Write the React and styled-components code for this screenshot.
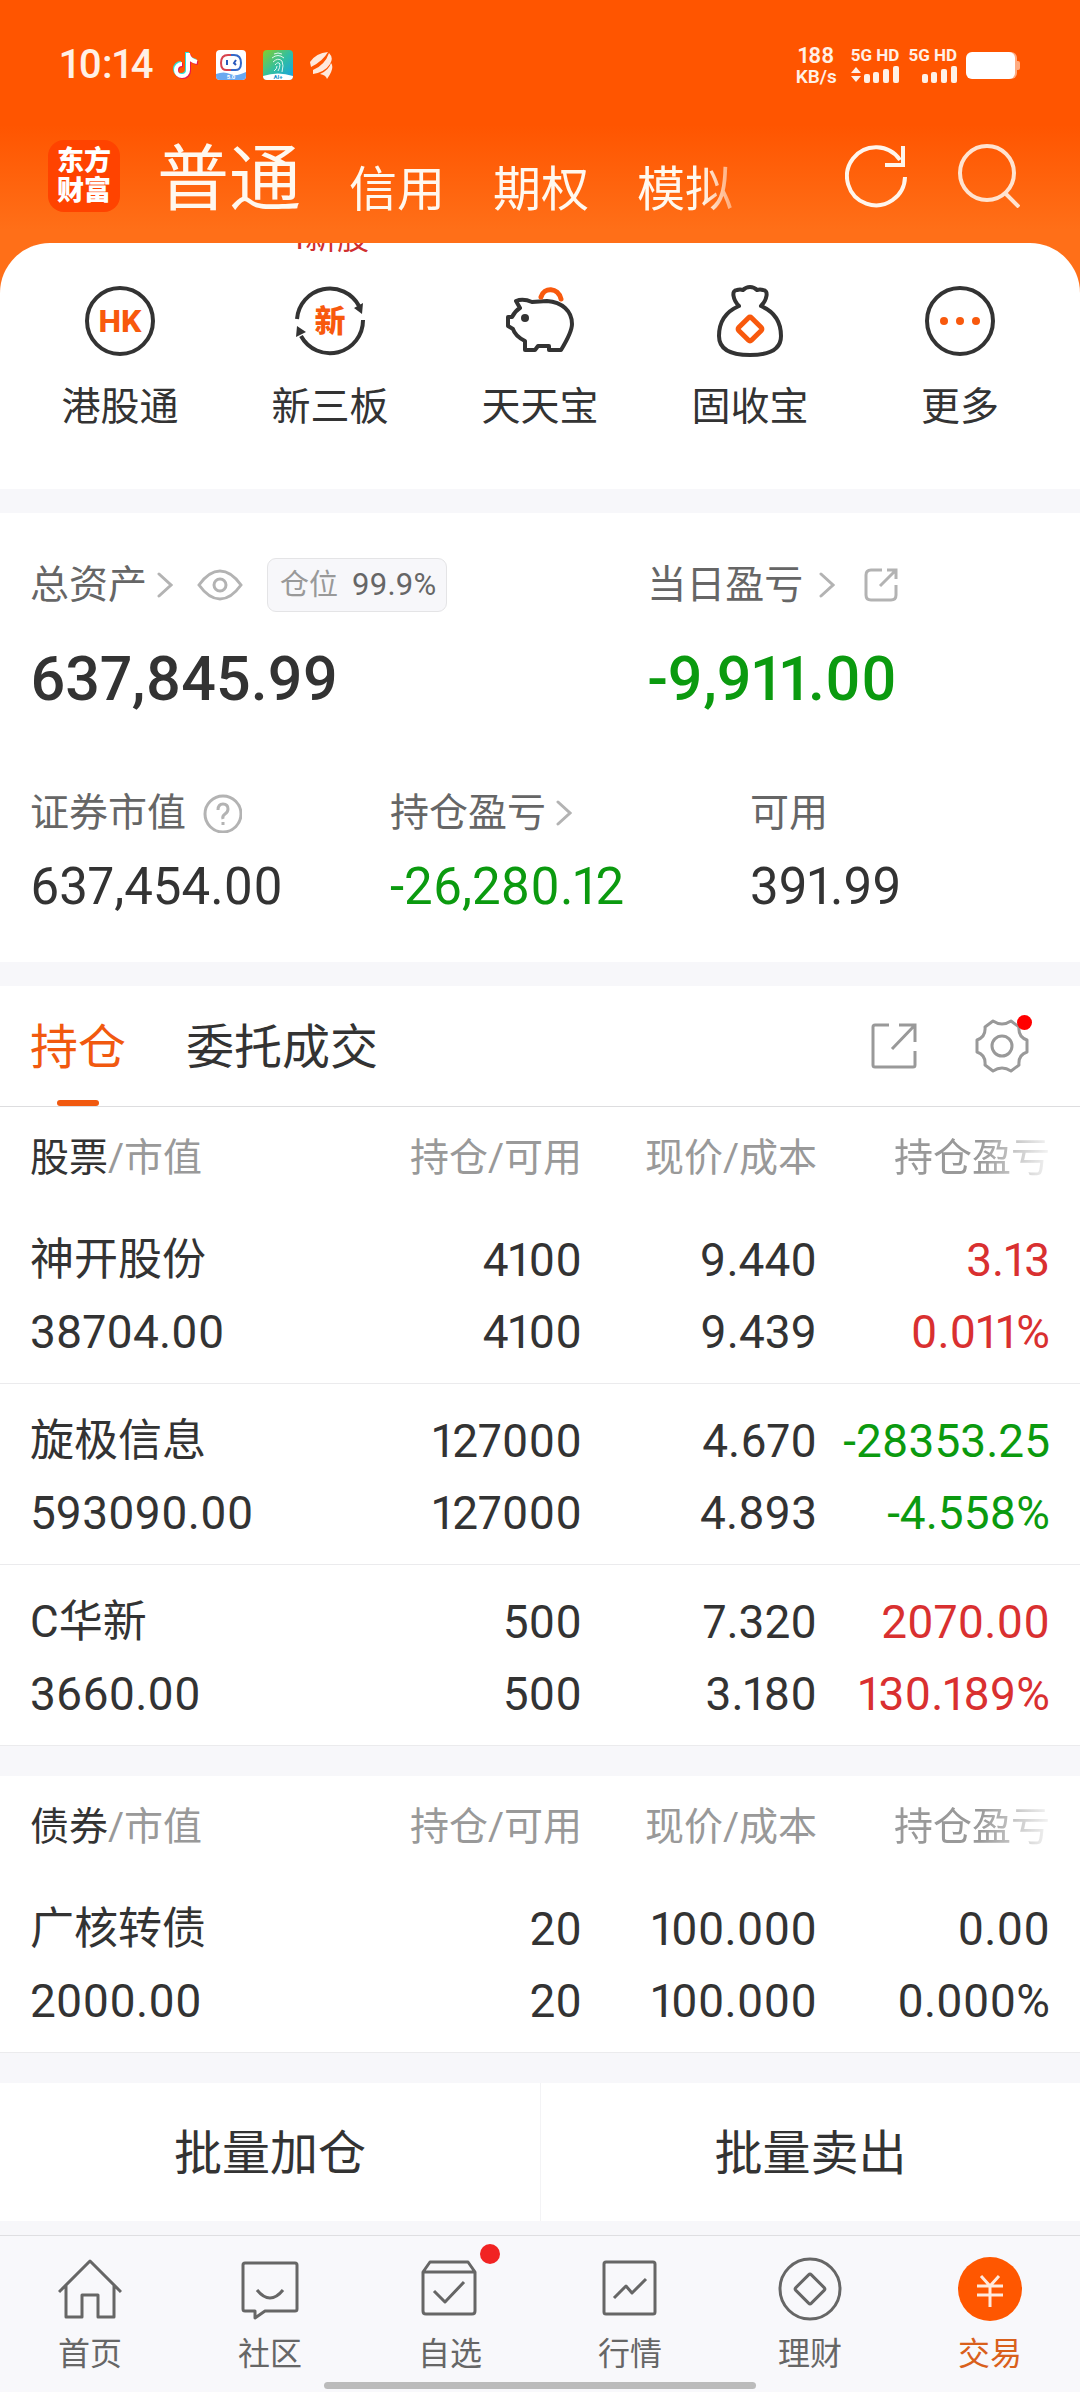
import React, { useState } from "react";
import styled, { createGlobalStyle } from "styled-components";

const holdings = [
  {
    name: "神开股份",
    value: "38704.00",
    amount: ["4100", "4100"],
    price: ["9.440", "9.439"],
    profit: ["3.13", "0.011%"],
    tone: "up",
  },
  {
    name: "旋极信息",
    value: "593090.00",
    amount: ["127000", "127000"],
    price: ["4.670", "4.893"],
    profit: ["-28353.25", "-4.558%"],
    tone: "down",
  },
  {
    name: "C华新",
    value: "3660.00",
    amount: ["500", "500"],
    price: ["7.320", "3.180"],
    profit: ["2070.00", "130.189%"],
    tone: "up",
  },
];

const bonds = [
  {
    name: "广核转债",
    value: "2000.00",
    amount: ["20", "20"],
    price: ["100.000", "100.000"],
    profit: ["0.00", "0.000%"],
    tone: "flat",
  },
];

const shortcuts = [
  { label: "港股通", icon: <HkIcon /> },
  { label: "新三板", icon: <NewBoardIcon /> },
  { label: "天天宝", icon: <PigIcon /> },
  { label: "固收宝", icon: <BagIcon /> },
  { label: "更多", icon: <MoreIcon /> },
];

const navItems = [
  { label: "首页", icon: <HomeIcon /> },
  { label: "社区", icon: <BubbleIcon /> },
  { label: "自选", icon: <BoxIcon />, dot: true },
  { label: "行情", icon: <ChartIcon /> },
  { label: "理财", icon: <CoinIcon /> },
  { label: "交易", icon: <TradeIcon />, active: true },
];

export default function App() {
  const [tab, setTab] = useState("持仓");

  return (
    <Page>
      <GlobalStyle />
      <Hero>
        <StatusBar />
        <Header>
          <Logo>
            东方
            <br />
            财富
          </Logo>
          <AccountTabs>
            <AccountTab $active>普通</AccountTab>
            <AccountTab>信用</AccountTab>
            <AccountTab>期权</AccountTab>
            <AccountTab>模拟</AccountTab>
          </AccountTabs>
          <HeaderActions>
            <IconButton aria-label="刷新">
              <RefreshIcon />
            </IconButton>
            <IconButton aria-label="搜索">
              <SearchIcon />
            </IconButton>
          </HeaderActions>
        </Header>
        <Panel>
          <TipRow>
            <Tip>1新股</Tip>
          </TipRow>
          <Shortcuts>
            {shortcuts.map((item) => (
              <Shortcut key={item.label}>
                {item.icon}
                <span>{item.label}</span>
              </Shortcut>
            ))}
          </Shortcuts>
        </Panel>
      </Hero>

      <Assets>
        <TopStats>
          <div>
            <TopLabel>
              总资产
              <Chevron $gap="10px" />
              <EyeIcon />
              <Badge>
                仓位 <BadgeValue>99.9%</BadgeValue>
              </Badge>
            </TopLabel>
            <BigNumber>637,845.99</BigNumber>
          </div>
          <div>
            <TopLabel>
              当日盈亏
              <Chevron $gap="16px" />
              <SmallExportIcon />
            </TopLabel>
            <BigNumber $tone="down">-9,911.00</BigNumber>
          </div>
        </TopStats>
        <SubStats>
          <div>
            <SubLabel>
              证券市值
              <HelpIcon />
            </SubLabel>
            <Number>637,454.00</Number>
          </div>
          <div>
            <SubLabel>
              持仓盈亏
              <Chevron $gap="10px" />
            </SubLabel>
            <Number $tone="down">-26,280.12</Number>
          </div>
          <div>
            <SubLabel>可用</SubLabel>
            <Number>391.99</Number>
          </div>
        </SubStats>
      </Assets>

      <Tabs>
        {["持仓", "委托成交"].map((name) => (
          <Tab key={name} $active={tab === name} onClick={() => setTab(name)}>
            {name}
          </Tab>
        ))}
        <TabActions>
          <IconButton aria-label="分享">
            <ExportIcon />
          </IconButton>
          <IconButton aria-label="设置">
            <GearIcon />
            <Dot $size="15px" $top="-4px" $right="-3px" $color="#ff0000" />
          </IconButton>
        </TabActions>
      </Tabs>
      <HoldingTable title="股票" rows={holdings} />
      <HoldingTable title="债券" rows={bonds} />

      <BatchActions>
        <BatchButton>批量加仓</BatchButton>
        <BatchButton>批量卖出</BatchButton>
      </BatchActions>

      <BottomNav>
        <NavList>
          {navItems.map((item) => (
            <NavLink href="#" key={item.label} $active={item.active}>
              <NavIcon>
                {item.icon}
                {item.dot && (
                  <Dot $size="20px" $top="-13px" $right="-18px" $color="#f12323" />
                )}
              </NavIcon>
              {item.label}
            </NavLink>
          ))}
        </NavList>
        <GestureBar />
      </BottomNav>
    </Page>
  );
}

function HoldingTable({ title, rows }) {
  return (
    <Table>
      <thead>
        <tr>
          <Th>
            <Strong>{title}</Strong>/市值
          </Th>
          <Th $width="236px">持仓/可用</Th>
          <Th $width="235px">现价/成本</Th>
          <Th $width="263px">
            <Fade>持仓盈亏</Fade>
          </Th>
        </tr>
      </thead>
      <tbody>
        {rows.map((row) => (
          <tr key={row.name}>
            <Td>
              <Name>{row.name}</Name>
              <Line>{row.value}</Line>
            </Td>
            <Td>
              <Line>{row.amount[0]}</Line>
              <Line>{row.amount[1]}</Line>
            </Td>
            <Td>
              <Line>{row.price[0]}</Line>
              <Line>{row.price[1]}</Line>
            </Td>
            <Td $tone={row.tone}>
              <Line>{row.profit[0]}</Line>
              <Line>{row.profit[1]}</Line>
            </Td>
          </tr>
        ))}
      </tbody>
    </Table>
  );
}

function StatusBar() {
  return (
    <Status>
      <Clock>10:14</Clock>
      <StatusApps>
        <NoteIcon />
        <RobotIcon />
        <FingerprintIcon />
        <SwooshIcon />
      </StatusApps>
      <Speed>
        <SpeedValue>188</SpeedValue>
        <SpeedUnit>KB/s</SpeedUnit>
      </Speed>
      <Signal>
        5G HD
        <SignalBars arrows />
      </Signal>
      <Signal>
        5G HD
        <SignalBars />
      </Signal>
      <BatteryIcon />
    </Status>
  );
}

/* ---------- icons ---------- */

function NoteIcon() {
  const note = "M14 2v17a6 6 0 1 1-6-6M14 3c1 5 4 7 9 8";
  return (
    <svg width="26" height="30" viewBox="0 0 26 30" fill="none" strokeWidth="4">
      <path d={note} stroke="#25e5dd" />
      <path d={note} stroke="#e8174f" transform="translate(2 2)" />
      <path d={note} stroke="#fff" transform="translate(1 1)" />
    </svg>
  );
}

function RobotIcon() {
  return (
    <svg width="30" height="30" viewBox="0 0 30 30" fill="none">
      <rect width="30" height="30" rx="4" fill="#fff" />
      <path d="M0 24q8-3 14 0t16-2v4q0 4-4 4H4q-4 0-4-4z" fill="#6aa9f0" />
      <path d="M15 5h-3q-7 0-7 8t7 7h3" stroke="#d8434e" strokeWidth="2" />
      <path d="M15 5h3q7 0 7 8t-7 7h-3" stroke="#3468c8" strokeWidth="2" />
      <path d="M11 10v5M20 10l-2 3 2 2" stroke="#2858bb" strokeWidth="2" />
      <text x="15" y="29" fontSize="6" fontWeight="700" textAnchor="middle" fill="#fff">
        5.0
      </text>
    </svg>
  );
}

function FingerprintIcon() {
  return (
    <svg width="30" height="30" viewBox="0 0 30 30" fill="none">
      <defs>
        <linearGradient id="finger" x1="0" y1="0" x2="1" y2="1">
          <stop offset="0" stopColor="#86cf2c" />
          <stop offset="0.5" stopColor="#32bfa0" />
          <stop offset="1" stopColor="#159fe8" />
        </linearGradient>
      </defs>
      <rect width="30" height="30" rx="4" fill="url(#finger)" />
      <path
        d="M11 4q4-2 8 0M9 8q6-5 12 0M10 12q5-5 9-1 2 4 0 11M12 15q3-4 5-1 0 4-2 7M14 16q0 3-3 5"
        stroke="#dff7ee"
      />
      <path d="M0 26q15-5 30 0 0 4-4 4H4q-4 0-4-4z" fill="#fff" />
      <text x="15" y="29" fontSize="6" fontWeight="700" textAnchor="middle" fill="#1593c9">
        AI+
      </text>
    </svg>
  );
}

function SwooshIcon() {
  return (
    <svg width="23" height="27" viewBox="0 0 23 27" fill="#ffe9dc">
      <path d="M0 10Q6 1 18 0 13 9 1 15z" />
      <path d="M3 18Q15 13 19 1 24 6 20 12 15 20 3 22z" />
      <path d="M10 22Q19 18 21 11 25 16 17 27 16 23 10 22z" />
    </svg>
  );
}

function SignalBars({ arrows }) {
  return (
    <svg width="48" height="17" viewBox="0 0 48 17" fill="#fff0e6">
      {arrows && <path d="M0 7l5-6 5 6zM0 10h10l-5 6z" />}
      <rect x="13" y="8" width="6" height="9" rx="2" />
      <rect x="22" y="6" width="6" height="11" rx="2" />
      <rect x="32" y="3" width="6" height="14" rx="2" />
      <rect x="42" y="0" width="6" height="17" rx="2" />
    </svg>
  );
}

function BatteryIcon() {
  return (
    <svg width="54" height="27" viewBox="0 0 54 27">
      <rect x="4" width="47" height="27" rx="6" fill="#ffab80" />
      <rect x="49" y="9" width="5" height="9" rx="2" fill="#ffab80" />
      <rect width="49" height="27" rx="6" fill="#fff" />
    </svg>
  );
}

function RefreshIcon() {
  return (
    <svg width="62" height="64" viewBox="0 0 62 64" fill="none" stroke="#fff5ec" strokeWidth="4">
      <path d="M60 33A29 29 0 1 1 55 16" />
      <path d="M58 2v19H40" />
    </svg>
  );
}

function SearchIcon() {
  return (
    <svg width="62" height="64" viewBox="0 0 62 64" fill="none" stroke="#ffe3d0" strokeWidth="4">
      <circle cx="29" cy="29" r="27" />
      <path d="M47 49l14 14" />
    </svg>
  );
}

function HkIcon() {
  return (
    <svg width="72" height="72" viewBox="0 0 72 72">
      <circle cx="36" cy="36" r="33" fill="none" stroke="#333" strokeWidth="4" />
      <text x="36" y="47" fontSize="32" fontWeight="800" textAnchor="middle" fill="#f8590d">
        HK
      </text>
    </svg>
  );
}

function NewBoardIcon() {
  return (
    <svg width="72" height="72" viewBox="0 0 72 72">
      <g fill="none" stroke="#333" strokeWidth="4">
        <path d="M3 34A33 33 0 0 1 65 21" />
        <path d="M69 35A33 33 0 0 1 7 51" />
      </g>
      <path d="M69 18L60 23 68 29zM3 41L2 52 12 47z" fill="#333" />
      <text x="36" y="47" fontSize="31" fontWeight="800" textAnchor="middle" fill="#f8590d">
        新
      </text>
    </svg>
  );
}

function PigIcon() {
  return (
    <svg width="72" height="72" viewBox="4 10 72 72" fill="none">
      <path
        d="M20 33L16 26Q23 23 32 27L47 26C62 27 72 36 72 49Q72 57 61 75H49V71H38L35 75H25V66Q15 61 13 54L8 51V42H12Q15 36 20 33z"
        stroke="#333"
        strokeWidth="4"
        strokeLinejoin="round"
      />
      <circle cx="25" cy="43" r="4" fill="#333" />
      <path d="M41 22C44 12 58 12 61 24" stroke="#f8590d" strokeWidth="5" strokeLinecap="round" />
    </svg>
  );
}

function BagIcon() {
  return (
    <svg width="72" height="72" viewBox="0 0 72 72" fill="none">
      <path
        d="M25 21C19 15 17 5 23 5Q26 4 29 5 32 2 36 2T43 5Q46 4 49 5C55 5 53 15 47 21C61 27 67 38 67 51C67 64 57 70 36 70S5 64 5 51C5 38 11 27 25 21z"
        stroke="#333"
        strokeWidth="4"
        strokeLinejoin="round"
      />
      <rect
        x="27"
        y="35"
        width="18"
        height="18"
        rx="2"
        transform="rotate(45 36 44)"
        stroke="#f8590d"
        strokeWidth="5"
      />
    </svg>
  );
}

function MoreIcon() {
  return (
    <svg width="72" height="72" viewBox="0 0 72 72">
      <circle cx="36" cy="36" r="33" fill="none" stroke="#333" strokeWidth="4" />
      <g fill="#f8590d">
        <circle cx="20" cy="36" r="4" />
        <circle cx="36" cy="36" r="4" />
        <circle cx="52" cy="36" r="4" />
      </g>
    </svg>
  );
}

function Chevron({ $gap }) {
  return (
    <ChevronSvg $gap={$gap} width="16" height="28" viewBox="0 0 16 28">
      <path d="M2 3l12 11L2 25" />
    </ChevronSvg>
  );
}

function EyeIcon() {
  return (
    <LabelIcon $gap="24px" width="46" height="32" viewBox="0 0 46 32">
      <path d="M2 16Q12 2 23 2T44 16Q34 30 23 30T2 16z" />
      <circle cx="23" cy="16" r="6" />
    </LabelIcon>
  );
}

function SmallExportIcon() {
  return (
    <LabelIcon $gap="29px" width="34" height="34" viewBox="0 0 34 34">
      <path d="M18 2H7Q2 2 2 7V27Q2 32 7 32H27Q32 32 32 27V17M23 2H32V11M32 2L16 18" />
    </LabelIcon>
  );
}

function HelpIcon() {
  return (
    <LabelIcon $gap="17px" width="39" height="39" viewBox="0 0 39 39">
      <circle cx="20" cy="20" r="18" />
      <path d="M15 16Q15 10 20 10T25 15Q25 18 22 20T20 25M20 28v3" />
    </LabelIcon>
  );
}

function ExportIcon() {
  return (
    <svg width="46" height="46" viewBox="0 0 46 46" fill="none" stroke="#999" strokeWidth="3">
      <path d="M18 2H4Q2 2 2 4V42Q2 44 4 44H42Q44 44 44 42V28M28 2H44V19M44 2L21 26" />
    </svg>
  );
}

function GearIcon() {
  return (
    <svg width="54" height="54" viewBox="0 0 54 54" fill="none" stroke="#999" strokeWidth="3">
      <path
        d="M52 21Q43 18 44 8L36 2Q27 8 18 2L10 8Q11 18 2 21V33Q11 36 10 46L18 52Q27 46 36 52L44 46Q43 36 52 33z"
        strokeLinejoin="round"
      />
      <circle cx="27" cy="27" r="10" />
    </svg>
  );
}

function HomeIcon() {
  return (
    <NavSvg viewBox="0 0 64 64">
      <path d="M1 35L32 4 63 35M8 28V60H24V38H40V60H56V28" />
    </NavSvg>
  );
}

function BubbleIcon() {
  return (
    <NavSvg viewBox="0 0 64 64">
      <path d="M7 6H57Q59 6 59 8V52Q59 54 57 54H27L17 61V54H7Q5 54 5 52V8Q5 6 7 6z" />
      <path d="M19 33Q32 49 45 33" />
    </NavSvg>
  );
}

function BoxIcon() {
  return (
    <NavSvg viewBox="0 0 64 64">
      <path d="M5 15L12 5H50L57 15V54Q57 57 54 57H8Q5 57 5 54zM5 15H57" />
      <path d="M16 34L27 45 46 25" />
    </NavSvg>
  );
}

function ChartIcon() {
  return (
    <NavSvg viewBox="0 0 64 64">
      <rect x="6" y="5" width="51" height="52" rx="2" />
      <path d="M16 41L28 29 34 36 48 22" />
    </NavSvg>
  );
}

function CoinIcon() {
  return (
    <NavSvg viewBox="0 0 64 64">
      <circle cx="32" cy="32" r="30" />
      <rect x="21" y="21" width="22" height="22" rx="2" transform="rotate(45 32 32)" />
    </NavSvg>
  );
}

function TradeIcon() {
  return (
    <svg width="64" height="64" viewBox="0 0 64 64">
      <circle cx="32" cy="32" r="32" fill="#ff5700" />
      <path
        d="M23 19L32 29 41 19M19 29H45M19 38H45M32 29V50"
        fill="none"
        stroke="#ffe9dc"
        strokeWidth="3"
      />
    </svg>
  );
}

/* ---------- styles ---------- */

const tones = { up: "#d93030", down: "#0b9a0f", flat: "#333333" };
const toneColor = ({ $tone }) => tones[$tone] || "#333333";

const GlobalStyle = createGlobalStyle`
  * {
    box-sizing: border-box;
  }
  body {
    margin: 0;
    background: #f7f7fa;
    color: #333333;
    font-family: Roboto, "Noto Sans CJK SC", sans-serif;
    font-variant-numeric: proportional-nums;
  }
  button {
    padding: 0;
    border: none;
    background: none;
    color: inherit;
    font-family: inherit;
    cursor: pointer;
  }
  svg {
    display: block;
    flex: none;
  }
`;
const Page = styled.div`
  display: flex;
  flex-direction: column;
  min-height: 100vh;
`;
const Hero = styled.header`
  background: linear-gradient(#ff5500 125px, #ff6f18 230px);
`;
const Status = styled.div`
  display: flex;
  align-items: center;
  height: 130px;
  padding: 0 60px;
  color: #fff0e6;
`;
const Clock = styled.div`
  font-size: 40px;
  font-weight: 500;
  line-height: 48px;
`;
const StatusApps = styled.div`
  display: flex;
  align-items: center;
  gap: 17px;
  flex: 1;
  margin-left: 19px;
`;
const Speed = styled.div`
  margin-right: 14px;
  font-weight: 600;
  text-align: center;
`;
const SpeedValue = styled.div`
  font-size: 22px;
  line-height: 22px;
`;
const SpeedUnit = styled.div`
  font-size: 19px;
  line-height: 19px;
`;
const Signal = styled.div`
  display: flex;
  flex-direction: column;
  align-items: flex-end;
  gap: 3px;
  margin-right: 9px;
  font-size: 17px;
  font-weight: 700;
  line-height: 16px;
`;
const Header = styled.div`
  display: flex;
  align-items: center;
  height: 113px;
  padding: 0 60px 22px 48px;
`;
const Logo = styled.div`
  width: 72px;
  height: 72px;
  padding: 6px 0;
  border-radius: 16px;
  background: #ff4300;
  color: #fff;
  font-size: 27px;
  font-weight: 900;
  line-height: 30px;
  text-align: center;
`;
const AccountTabs = styled.nav`
  display: flex;
  align-items: flex-end;
  gap: 48px;
  flex: 1;
  margin: 0 48px 0 37px;
  padding-top: 8px;
  mask-image: linear-gradient(to right, #000 85%, transparent 94%);
`;
const AccountTab = styled.button`
  color: #fff8ef;
  font-size: ${({ $active }) => ($active ? "72px" : "48px")};
  line-height: ${({ $active }) => ($active ? "80px" : "60px")};
  white-space: nowrap;
`;
const HeaderActions = styled.div`
  display: flex;
  gap: 51px;
`;
const IconButton = styled.button`
  position: relative;
`;
const Panel = styled.div`
  border-radius: 50px 50px 0 0;
  background: #ffffff;
`;
const TipRow = styled.div`
  display: grid;
  grid-template-columns: repeat(5, 1fr);
  grid-template-rows: 10px;
  align-items: end;
  padding: 0 15px;
  overflow: hidden;
`;
const Tip = styled.div`
  grid-column: 2;
  color: #d03030;
  font-size: 32px;
  line-height: 30px;
  text-align: center;
`;
const Shortcuts = styled.nav`
  display: grid;
  grid-template-columns: repeat(5, 1fr);
  padding: 32px 15px 58px;
`;
const Shortcut = styled.button`
  display: flex;
  flex-direction: column;
  align-items: center;
  gap: 26px;
  font-size: 39px;
  line-height: 48px;
`;
const Assets = styled.section`
  margin-top: 24px;
  padding: 45px 0 47px 30px;
  background: #ffffff;
`;
const TopStats = styled.div`
  display: grid;
  grid-template-columns: 4fr 3fr;
  margin-right: -30px;
`;
const SubStats = styled.div`
  display: grid;
  grid-template-columns: repeat(3, 1fr);
  margin-top: 81px;
  margin-right: -30px;
`;
const TopLabel = styled.div`
  display: flex;
  align-items: center;
  color: #666666;
  font-size: 39px;
  line-height: 54px;
`;
const SubLabel = styled(TopLabel)`
  line-height: 42px;
`;
const ChevronSvg = styled.svg`
  margin-left: ${({ $gap }) => $gap};
  fill: none;
  stroke: #b3b3b3;
  stroke-width: 3;
  stroke-linecap: round;
`;
const LabelIcon = styled.svg`
  margin-left: ${({ $gap }) => $gap};
  fill: none;
  stroke: #b3b3b3;
  stroke-width: 3;
`;
const Badge = styled.span`
  display: flex;
  align-items: center;
  gap: 14px;
  height: 54px;
  margin-left: 24px;
  padding: 0 10px 0 12px;
  border: 1px solid #e4e4e6;
  border-radius: 9px;
  background: #f7f7fa;
  color: #999999;
  font-size: 29px;
`;
const BadgeValue = styled.span`
  color: #666666;
  font-size: 31px;
`;
const BigNumber = styled.div`
  margin-top: 35px;
  color: ${toneColor};
  font-size: 61px;
  font-weight: 500;
  line-height: 64px;
`;
const Number = styled.div`
  margin-top: 25px;
  color: ${toneColor};
  font-size: 51px;
  line-height: 56px;
`;
const Tabs = styled.div`
  display: flex;
  align-items: center;
  gap: 60px;
  height: 121px;
  margin-top: 24px;
  padding: 0 51px 0 30px;
  border-bottom: 1px solid #dddddf;
  background: #ffffff;
`;
const Tab = styled.button`
  position: relative;
  padding-top: 4px;
  color: ${({ $active }) => ($active ? "#f1590f" : "#333333")};
  font-size: 48px;
  line-height: 116px;

  &::after {
    content: "";
    display: ${({ $active }) => ($active ? "block" : "none")};
    position: absolute;
    bottom: 0;
    left: calc(50% - 21px);
    width: 42px;
    height: 6px;
    border-radius: 3px;
    background: #f1590f;
  }
`;
const TabActions = styled.div`
  display: flex;
  align-items: center;
  gap: 58px;
  margin-left: auto;
`;
const Dot = styled.span`
  position: absolute;
  top: ${({ $top }) => $top};
  right: ${({ $right }) => $right};
  width: ${({ $size }) => $size};
  height: ${({ $size }) => $size};
  border-radius: 50%;
  background: ${({ $color }) => $color};
`;
const Table = styled.table`
  width: 100%;
  border-collapse: separate;
  border-spacing: 0;
  table-layout: fixed;
  background: #ffffff;

  & + & {
    margin-top: 30px;
  }
  th:first-child,
  td:first-child {
    padding-left: 30px;
    text-align: left;
  }
  th:last-child,
  td:last-child {
    padding-right: 30px;
  }
`;
const Th = styled.th`
  width: ${({ $width }) => $width || "auto"};
  padding: 21px 0 15px;
  color: #999999;
  font-size: 39px;
  font-weight: 400;
  line-height: 60px;
  text-align: right;
  white-space: nowrap;
`;
const Strong = styled.span`
  color: #333333;
`;
const Fade = styled.span`
  mask-image: linear-gradient(to right, #000 55%, rgba(0, 0, 0, 0.1));
`;
const Td = styled.td`
  padding: 21px 0 15px;
  border-bottom: 1px solid #ebebed;
  color: ${toneColor};
  text-align: right;
  white-space: nowrap;
`;
const Line = styled.div`
  font-size: 46px;
  line-height: 72px;
`;
const Name = styled(Line)`
  font-size: 44px;
`;
const BatchActions = styled.div`
  display: grid;
  grid-template-columns: 1fr 1fr;
  margin: 30px 0 14px;
  background: #ffffff;
`;
const BatchButton = styled.button`
  padding-top: 4px;
  font-size: 48px;
  line-height: 134px;

  & + & {
    border-left: 1px solid #f3f3f5;
  }
`;
const BottomNav = styled.footer`
  margin-top: auto;
  padding: 21px 0 3px;
  border-top: 1px solid #dfdfe2;
  background: #f8f8fb;
`;
const NavList = styled.nav`
  display: grid;
  grid-template-columns: repeat(6, 1fr);
`;
const NavLink = styled.a`
  display: flex;
  flex-direction: column;
  align-items: center;
  gap: 15px;
  color: ${({ $active }) => ($active ? "#d9601c" : "#666666")};
  font-size: 32px;
  line-height: 36px;
  text-decoration: none;
`;
const NavIcon = styled.span`
  position: relative;
`;
const NavSvg = styled.svg`
  width: 64px;
  height: 64px;
  fill: none;
  stroke: #666666;
  stroke-width: 3;
  stroke-linejoin: round;
`;
const GestureBar = styled.div`
  width: 40%;
  height: 7px;
  margin: 10px auto 0;
  border-radius: 4px;
  background: #bbbbbb;
`;
